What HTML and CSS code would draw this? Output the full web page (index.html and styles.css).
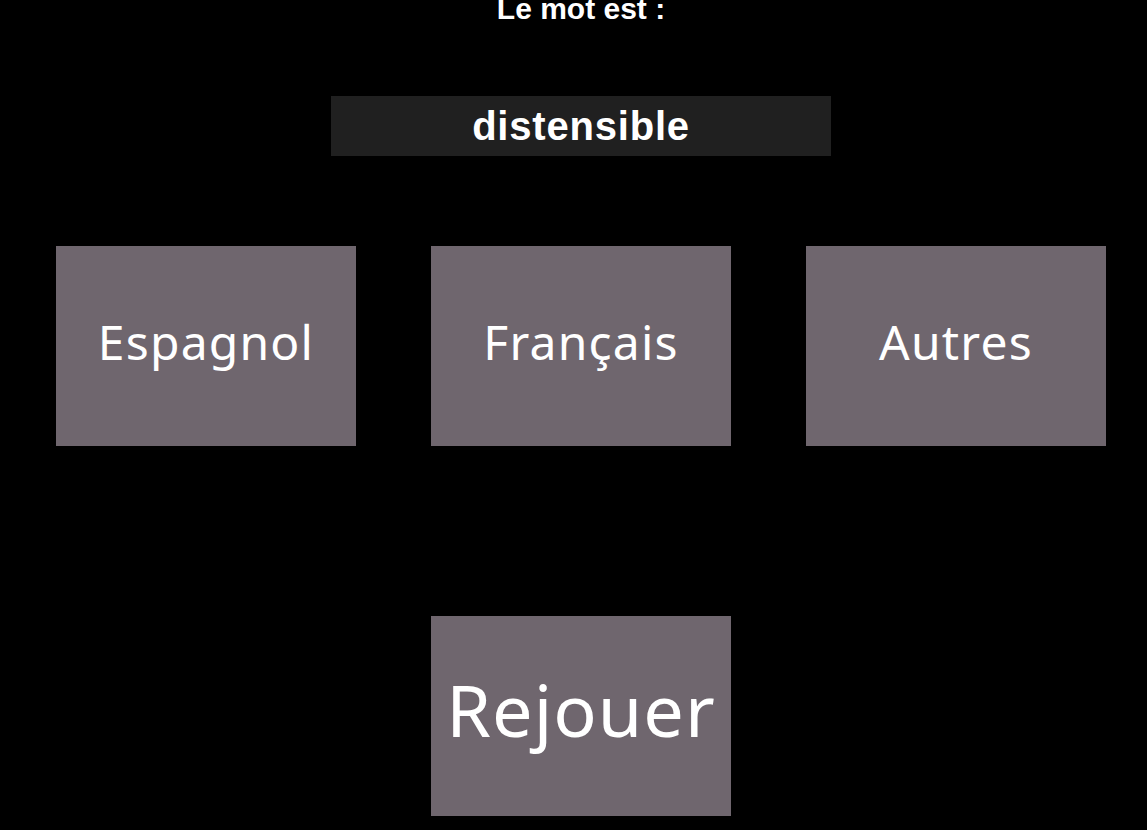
FILE: index.html
```html
<!DOCTYPE html>
<html lang="fr">
<head>
  <meta charset="UTF-8" />
  <meta name="viewport" content="width=device-width, initial-scale=1.0"/>
  <title>Le mot</title>
  <link rel="stylesheet" href="styles.css">
</head>
<body>
  <div class="page">
    <h1 class="title">Le mot est :</h1>

    <div class="word">distensible</div>

    <div class="choices">
      <button class="choice">Espagnol</button>
      <button class="choice">Français</button>
      <button class="choice">Autres</button>
    </div>

    <div class="replay">
      <button class="choice big">Rejouer</button>
    </div>
  </div>
</body>
</html>
```

FILE: styles.css
```css
body {
  margin: 0;
  background: #000;
  font-family: "Liberation Sans", Arial, sans-serif;
  color: #fff;
  overflow: hidden;
}

.page {
  padding-left: 15px;
  display: flex;
  flex-direction: column;
  align-items: center;
}

.title {
  margin: -8px 0 0 0;
  font-size: 30px;
  font-weight: bold;
  line-height: 34px;
}

.word {
  margin-top: 70px;
  width: 500px;
  height: 60px;
  background: #202020;
  font-size: 40px;
  font-weight: bold;
  letter-spacing: 0.8px;
  display: flex;
  justify-content: center;
  align-items: center;
}

.choices {
  margin-top: 90px;
  display: flex;
  gap: 75px;
}

.choice {
  width: 300px;
  height: 200px;
  border: none;
  background: #6f666e;
  color: #fff;
  font-family: "Noto Sans", "Open Sans", sans-serif;
  font-size: 48px;
  letter-spacing: 1.2px;
  padding: 0 0 10px 0;
  cursor: pointer;
}

.replay {
  margin-top: 170px;
}

.choice.big {
  font-size: 72px;
  letter-spacing: 1px;
  padding-bottom: 14px;
}
```
